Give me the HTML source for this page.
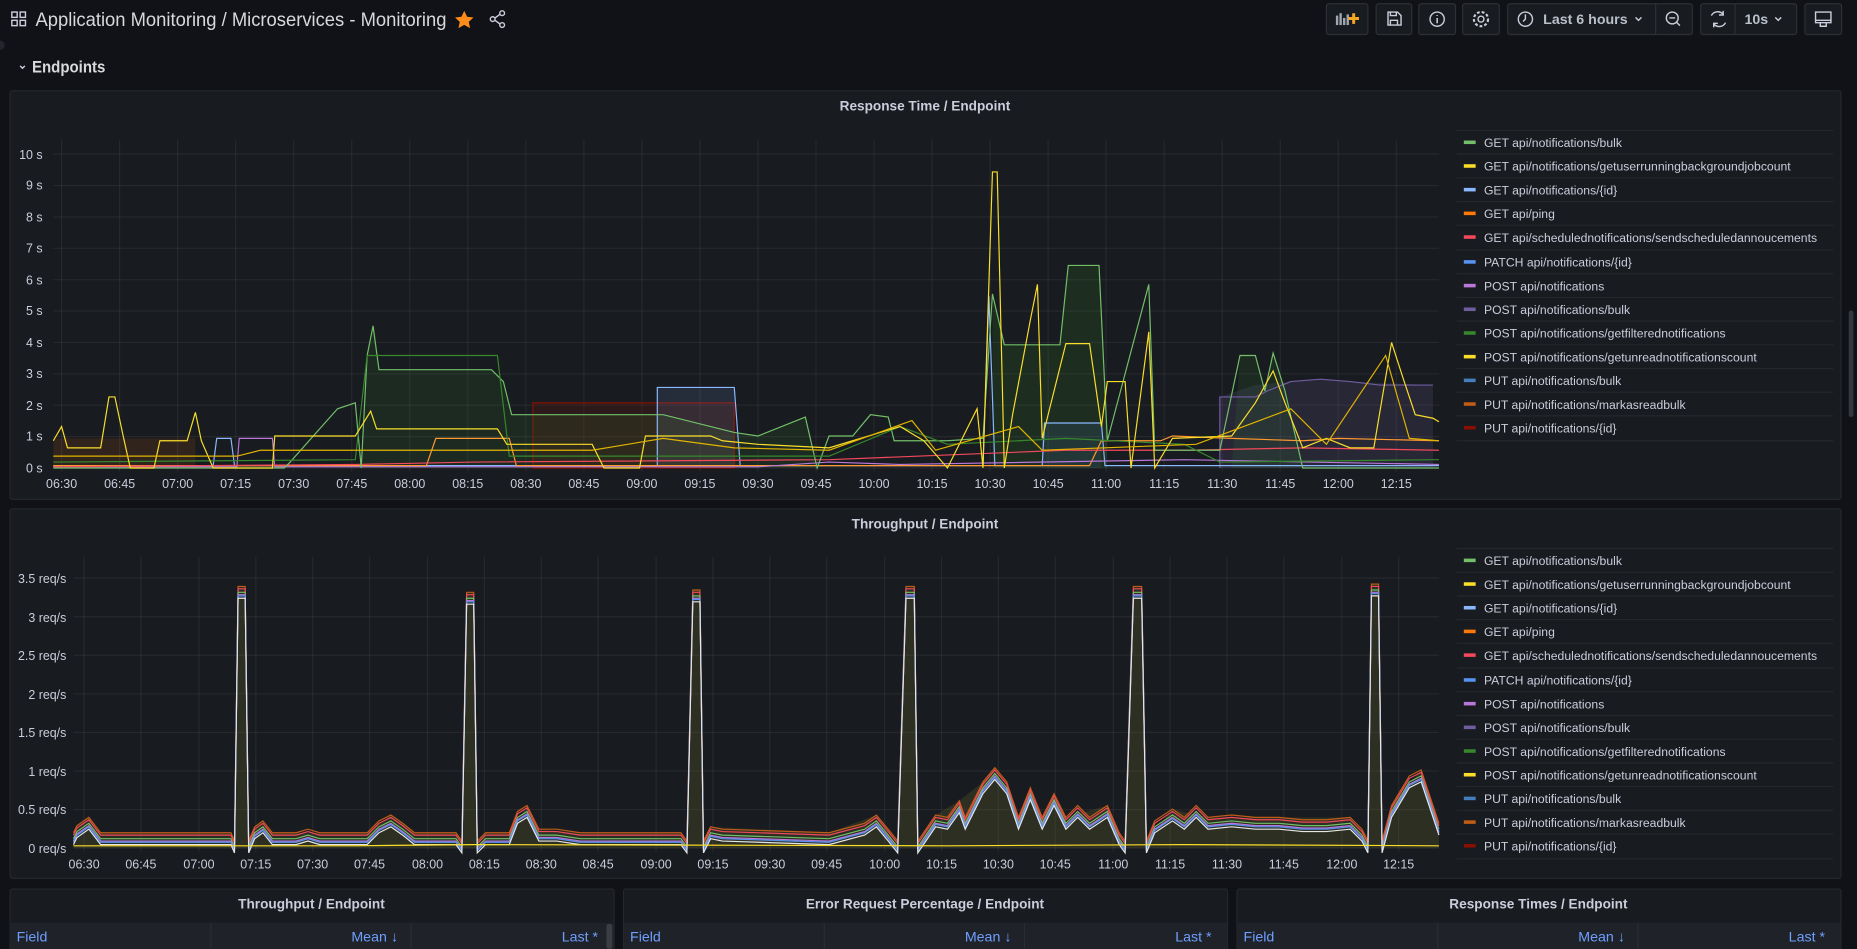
<!DOCTYPE html>
<html><head><meta charset="utf-8"><style>
html,body{margin:0;padding:0;background:#111217;width:1857px;height:949px;overflow:hidden}
svg{display:block}
text{font-family:"Liberation Sans",sans-serif;fill:#ccccdc}
.ax{font-size:10.5px;fill:#c7d0d9}
.lg{font-size:10.3px;fill:#ccccdc}
.ttl{font-size:11.5px;font-weight:bold;fill:#ccccdc}
.btn{fill:#181b1f;stroke:#2d3036;stroke-width:1}
.ic{fill:none;stroke:#ccccdc;stroke-width:1.2}
.grid line{stroke:rgba(204,204,220,0.08);stroke-width:1}
.sep{stroke:#24272c;stroke-width:1}
</style></head><body>
<svg width="1857" height="949" viewBox="0 0 1568 801" xmlns="http://www.w3.org/2000/svg">
<rect width="1568" height="801" fill="#111217"/>
<!-- header -->
<g class="ic"><rect x="10" y="10" width="4.5" height="4.5"/><rect x="17" y="10" width="4.5" height="4.5"/><rect x="10" y="17" width="4.5" height="4.5"/><rect x="17" y="17" width="4.5" height="4.5"/></g>
<text x="30" y="22" textLength="347" lengthAdjust="spacingAndGlyphs" style="font-size:16px;fill:#d8d9da">Application Monitoring  / Microservices - Monitoring</text>
<path d="M392 9 l2.4 5 5.4 .6 -4 3.7 1.1 5.3 -4.9 -2.7 -4.9 2.7 1.1 -5.3 -4 -3.7 5.4 -.6z" fill="#ff8c1a"/>
<g class="ic"><circle cx="416" cy="16" r="2"/><circle cx="424" cy="11" r="2"/><circle cx="424" cy="21" r="2"/><path d="M418 15 l4 -3 M418 17 l4 3"/></g>
<circle cx="0" cy="38" r="4" fill="#22252b"/>
<!-- buttons -->
<rect class="btn" x="1120" y="3" width="35" height="26" rx="2"/>
<g fill="#9fa7b3"><rect x="1128" y="13" width="2" height="8"/><rect x="1131" y="11" width="2" height="10"/><rect x="1134" y="15" width="2" height="6"/><rect x="1137" y="12" width="2" height="9"/></g>
<path d="M1143 11v9M1138.5 15.5h9" stroke="#f5a623" stroke-width="2.5"/>
<rect class="btn" x="1162" y="3" width="30" height="26" rx="2"/>
<path class="ic" d="M1172 10h8l3 3v8h-11z M1174 10v3h5v-3 M1174 21v-4h6v4"/>
<rect class="btn" x="1198" y="3" width="31" height="26" rx="2"/>
<circle class="ic" cx="1213.5" cy="16" r="6"/><path d="M1213.5 15v4.5M1213.5 12.5v.8" stroke="#ccccdc" stroke-width="1.3"/>
<rect class="btn" x="1235" y="3" width="31" height="26" rx="2"/>
<circle class="ic" cx="1250.5" cy="16" r="2.5"/><circle cx="1250.5" cy="16" r="6" fill="none" stroke="#ccccdc" stroke-width="1.8" stroke-dasharray="2.4 1.7"/>
<rect class="btn" x="1273" y="3" width="156" height="26" rx="2"/><line x1="1398" y1="3" x2="1398" y2="29" stroke="#2d3036"/>
<circle class="ic" cx="1288" cy="16" r="6"/><path class="ic" d="M1288 12v4l-2 2"/>
<text x="1303" y="20" style="font-size:12px;font-weight:bold;fill:#b8c0cc">Last 6 hours</text>
<path class="ic" d="M1381 14.5l2.5 2.5 2.5-2.5"/>
<circle class="ic" cx="1412" cy="15" r="5"/><path class="ic" d="M1409.5 15h5M1415.5 18.5l3 3"/>
<rect class="btn" x="1436" y="3" width="81" height="26" rx="2"/><line x1="1465" y1="3" x2="1465" y2="29" stroke="#2d3036"/>
<path class="ic" d="M1445 13a6 6 0 0 1 10 -1 M1455 9v3.5h-3.5 M1457 19a6 6 0 0 1 -10 1 M1447 23v-3.5h3.5"/>
<text x="1473" y="20" style="font-size:12px;font-weight:bold;fill:#b8c0cc">10s</text>
<path class="ic" d="M1499 14.5l2.5 2.5 2.5-2.5"/>
<rect class="btn" x="1524" y="3" width="31" height="26" rx="2"/>
<path class="ic" d="M1533 10h13v9h-13z M1533 17h13 M1537 19v3h5v-3"/>
<!-- Endpoints -->
<path class="ic" d="M17 55.5l2 2 2-2"/>
<text x="27" y="61" textLength="62" lengthAdjust="spacingAndGlyphs" style="font-size:14px;font-weight:bold;fill:#d8d9da">Endpoints</text>
<!-- scrollbar -->
<rect x="1561" y="262" width="4" height="90" rx="2" fill="#34373d"/>

<!-- PANEL 1 -->
<rect x="8.5" y="76.5" width="1546" height="345" rx="2" fill="#181b1f" stroke="#24272c"/>
<text class="ttl" x="781" y="93" text-anchor="middle">Response Time / Endpoint</text>
<g class="grid">
<line x1="45" y1="395" x2="1215" y2="395"/><line x1="45" y1="368.5" x2="1215" y2="368.5"/><line x1="45" y1="342" x2="1215" y2="342"/><line x1="45" y1="315.5" x2="1215" y2="315.5"/><line x1="45" y1="289" x2="1215" y2="289"/><line x1="45" y1="262.5" x2="1215" y2="262.5"/><line x1="45" y1="236" x2="1215" y2="236"/><line x1="45" y1="209.5" x2="1215" y2="209.5"/><line x1="45" y1="183" x2="1215" y2="183"/><line x1="45" y1="156.5" x2="1215" y2="156.5"/><line x1="45" y1="130" x2="1215" y2="130"/>
<line x1="52" y1="118" x2="52" y2="398"/><line x1="101" y1="118" x2="101" y2="398"/><line x1="150" y1="118" x2="150" y2="398"/><line x1="199" y1="118" x2="199" y2="398"/><line x1="248" y1="118" x2="248" y2="398"/><line x1="297" y1="118" x2="297" y2="398"/><line x1="346" y1="118" x2="346" y2="398"/><line x1="395" y1="118" x2="395" y2="398"/><line x1="444" y1="118" x2="444" y2="398"/><line x1="493" y1="118" x2="493" y2="398"/><line x1="542" y1="118" x2="542" y2="398"/><line x1="591" y1="118" x2="591" y2="398"/><line x1="640" y1="118" x2="640" y2="398"/><line x1="689" y1="118" x2="689" y2="398"/><line x1="738" y1="118" x2="738" y2="398"/><line x1="787" y1="118" x2="787" y2="398"/><line x1="836" y1="118" x2="836" y2="398"/><line x1="885" y1="118" x2="885" y2="398"/><line x1="934" y1="118" x2="934" y2="398"/><line x1="983" y1="118" x2="983" y2="398"/><line x1="1032" y1="118" x2="1032" y2="398"/><line x1="1081" y1="118" x2="1081" y2="398"/><line x1="1130" y1="118" x2="1130" y2="398"/><line x1="1179" y1="118" x2="1179" y2="398"/>
</g>
<g class="ax" text-anchor="end"><text x="36" y="399">0 s</text><text x="36" y="372">1 s</text><text x="36" y="346">2 s</text><text x="36" y="319">3 s</text><text x="36" y="293">4 s</text><text x="36" y="266">5 s</text><text x="36" y="240">6 s</text><text x="36" y="213">7 s</text><text x="36" y="187">8 s</text><text x="36" y="160">9 s</text><text x="36" y="134">10 s</text></g>
<g class="ax" text-anchor="middle"><text x="52" y="412">06:30</text><text x="101" y="412">06:45</text><text x="150" y="412">07:00</text><text x="199" y="412">07:15</text><text x="248" y="412">07:30</text><text x="297" y="412">07:45</text><text x="346" y="412">08:00</text><text x="395" y="412">08:15</text><text x="444" y="412">08:30</text><text x="493" y="412">08:45</text><text x="542" y="412">09:00</text><text x="591" y="412">09:15</text><text x="640" y="412">09:30</text><text x="689" y="412">09:45</text><text x="738" y="412">10:00</text><text x="787" y="412">10:15</text><text x="836" y="412">10:30</text><text x="885" y="412">10:45</text><text x="934" y="412">11:00</text><text x="983" y="412">11:15</text><text x="1032" y="412">11:30</text><text x="1081" y="412">11:45</text><text x="1130" y="412">12:00</text><text x="1179" y="412">12:15</text></g>
<!-- fills -->
<path d="M450 395V340H620V395Z" fill="#890f02" fill-opacity="0.18" stroke="#890f02" stroke-width="1"/>
<path d="M45 395V370H165V395Z" fill="#c15c17" fill-opacity="0.15"/>
<path d="M555 395V327H620V395Z" fill="#8ab8ff" fill-opacity="0.12"/>
<path d="M1030 395V335L1060 325 1090 322 1115 320 1140 322 1210 325V395Z" fill="#705da0" fill-opacity="0.18"/>
<path d="M305 395L310 300 315 275 320 312 415 312 425 322 432 350 560 350 620 365 640 368 680 352 690 395Z" fill="#37872d" fill-opacity="0.15"/>
<path d="M838 395L838 248 848 291 895 291 902 224 928 224 935 372 935 395Z" fill="#37872d" fill-opacity="0.18"/>
<path d="M1040 395L1047 300 1060 300 1068 330 1075 298 1085 330 1100 395Z" fill="#37872d" fill-opacity="0.15"/>
<path d="M880 395V357H930V395Z" fill="#5794f2" fill-opacity="0.1"/>
<g fill="none" stroke-width="1">
<polyline stroke="#705da0" points="1030,395 1030,335 1060,335 1070,330 1090,322 1115,320 1140,322 1165,325 1210,325"/>
<polyline stroke="#8ab8ff" points="45,393 180,393 183,370 195,370 198,393 555,393 555,327 620,327 625,393 830,393 835,250 840,393 880,393 882,357 930,357 933,393 1215,393"/>
<polyline stroke="#ff9830" points="45,393 360,393 368,370 430,370 436,393 920,393 930,372 980,372 990,368 1040,370 1100,372 1130,370 1215,372"/>
<polyline stroke="#b877d9" points="45,394 200,394 202,370 230,370 232,394 640,394 700,390 760,392 1000,388 1215,392"/>
<polyline stroke="#f2495c" points="45,394 300,392 400,390 700,388 900,380 1000,380 1100,378 1215,380"/>
<polyline stroke="#73bf69" points="45,395 240,395 245,390 285,345 300,340 305,395 310,300 315,275 320,312 415,312 425,322 432,350 560,350 620,365 640,368 680,352 690,395 700,368 720,368 735,350 750,352 755,372 800,372 830,370 838,248 848,291 895,291 902,224 928,224 935,372 970,240 975,380 1030,380 1047,300 1060,300 1068,330 1075,298 1085,330 1100,395 1215,395"/>
<polyline stroke="#37872d" points="45,390 300,388 310,300 420,300 430,385 700,385 760,360 800,375 900,370 1000,375 1030,390 1215,388"/>
<polyline stroke="#fade2a" points="45,372 52,360 57,378 85,378 92,335 97,335 104,368 110,395 130,395 135,372 158,372 165,348 170,372 180,395 230,395 232,368 300,368 313,347 318,362 420,362 428,375 500,375 510,395 540,395 545,368 600,368 610,372 640,375 700,378 720,372 760,360 780,372 800,395 825,345 830,395 838,145 842,145 848,395 855,350 870,270 876,240 880,370 900,290 920,290 930,360 935,322 950,322 955,395 970,280 975,395 990,370 1040,368 1060,340 1075,313 1085,340 1100,378 1120,370 1140,378 1160,378 1175,289 1185,320 1195,350 1210,353 1215,356"/>
<polyline stroke="#e0b400" points="45,385 200,385 220,380 500,380 560,370 620,378 700,380 770,355 790,380 860,360 880,380 1010,375 1050,360 1090,345 1120,375 1170,300 1190,370 1215,372"/>
</g>
<!-- legend 1 -->
<g class="sep"><line x1="1230" y1="110" x2="1548" y2="110"/><line x1="1230" y1="130" x2="1548" y2="130"/><line x1="1230" y1="150" x2="1548" y2="150"/><line x1="1230" y1="170" x2="1548" y2="170"/><line x1="1230" y1="190" x2="1548" y2="190"/><line x1="1230" y1="211" x2="1548" y2="211"/><line x1="1230" y1="231" x2="1548" y2="231"/><line x1="1230" y1="251" x2="1548" y2="251"/><line x1="1230" y1="271" x2="1548" y2="271"/><line x1="1230" y1="291" x2="1548" y2="291"/><line x1="1230" y1="311" x2="1548" y2="311"/><line x1="1230" y1="331" x2="1548" y2="331"/><line x1="1230" y1="351" x2="1548" y2="351"/><line x1="1230" y1="372" x2="1548" y2="372"/></g>
<g stroke-width="3">
<line x1="1236" y1="120" x2="1246" y2="120" stroke="#73bf69"/><line x1="1236" y1="140" x2="1246" y2="140" stroke="#fade2a"/><line x1="1236" y1="160" x2="1246" y2="160" stroke="#8ab8ff"/><line x1="1236" y1="180" x2="1246" y2="180" stroke="#ff780a"/><line x1="1236" y1="200" x2="1246" y2="200" stroke="#f2495c"/><line x1="1236" y1="221" x2="1246" y2="221" stroke="#5794f2"/><line x1="1236" y1="241" x2="1246" y2="241" stroke="#b877d9"/><line x1="1236" y1="261" x2="1246" y2="261" stroke="#705da0"/><line x1="1236" y1="281" x2="1246" y2="281" stroke="#37872d"/><line x1="1236" y1="301" x2="1246" y2="301" stroke="#fade2a"/><line x1="1236" y1="321" x2="1246" y2="321" stroke="#447ebc"/><line x1="1236" y1="341" x2="1246" y2="341" stroke="#c15c17"/><line x1="1236" y1="361" x2="1246" y2="361" stroke="#890f02"/>
</g>
<g class="lg"><text x="1253" y="124">GET api/notifications/bulk</text><text x="1253" y="144">GET api/notifications/getuserrunningbackgroundjobcount</text><text x="1253" y="164">GET api/notifications/{id}</text><text x="1253" y="184">GET api/ping</text><text x="1253" y="204">GET api/schedulednotifications/sendscheduledannoucements</text><text x="1253" y="225">PATCH api/notifications/{id}</text><text x="1253" y="245">POST api/notifications</text><text x="1253" y="265">POST api/notifications/bulk</text><text x="1253" y="285">POST api/notifications/getfilterednotifications</text><text x="1253" y="305">POST api/notifications/getunreadnotificationscount</text><text x="1253" y="325">PUT api/notifications/bulk</text><text x="1253" y="345">PUT api/notifications/markasreadbulk</text><text x="1253" y="365">PUT api/notifications/{id}</text></g>

<!-- PANEL 2 -->
<rect x="8.5" y="429.5" width="1546" height="312" rx="2" fill="#181b1f" stroke="#24272c"/>
<text class="ttl" x="781" y="446" text-anchor="middle">Throughput / Endpoint</text>
<g class="grid">
<line x1="62" y1="716" x2="1215" y2="716"/><line x1="62" y1="683.4" x2="1215" y2="683.4"/><line x1="62" y1="650.9" x2="1215" y2="650.9"/><line x1="62" y1="618.3" x2="1215" y2="618.3"/><line x1="62" y1="585.7" x2="1215" y2="585.7"/><line x1="62" y1="553.1" x2="1215" y2="553.1"/><line x1="62" y1="520.6" x2="1215" y2="520.6"/><line x1="62" y1="488" x2="1215" y2="488"/>
<line x1="71" y1="470" x2="71" y2="719"/><line x1="119" y1="470" x2="119" y2="719"/><line x1="168" y1="470" x2="168" y2="719"/><line x1="216" y1="470" x2="216" y2="719"/><line x1="264" y1="470" x2="264" y2="719"/><line x1="312" y1="470" x2="312" y2="719"/><line x1="361" y1="470" x2="361" y2="719"/><line x1="409" y1="470" x2="409" y2="719"/><line x1="457" y1="470" x2="457" y2="719"/><line x1="505" y1="470" x2="505" y2="719"/><line x1="554" y1="470" x2="554" y2="719"/><line x1="602" y1="470" x2="602" y2="719"/><line x1="650" y1="470" x2="650" y2="719"/><line x1="698" y1="470" x2="698" y2="719"/><line x1="747" y1="470" x2="747" y2="719"/><line x1="795" y1="470" x2="795" y2="719"/><line x1="843" y1="470" x2="843" y2="719"/><line x1="891" y1="470" x2="891" y2="719"/><line x1="940" y1="470" x2="940" y2="719"/><line x1="988" y1="470" x2="988" y2="719"/><line x1="1036" y1="470" x2="1036" y2="719"/><line x1="1084" y1="470" x2="1084" y2="719"/><line x1="1133" y1="470" x2="1133" y2="719"/><line x1="1181" y1="470" x2="1181" y2="719"/>
</g>
<g class="ax" text-anchor="end"><text x="56" y="720">0 req/s</text><text x="56" y="687">0.5 req/s</text><text x="56" y="655">1 req/s</text><text x="56" y="622">1.5 req/s</text><text x="56" y="590">2 req/s</text><text x="56" y="557">2.5 req/s</text><text x="56" y="525">3 req/s</text><text x="56" y="492">3.5 req/s</text></g>
<g class="ax" text-anchor="middle"><text x="71" y="733">06:30</text><text x="119" y="733">06:45</text><text x="168" y="733">07:00</text><text x="216" y="733">07:15</text><text x="264" y="733">07:30</text><text x="312" y="733">07:45</text><text x="361" y="733">08:00</text><text x="409" y="733">08:15</text><text x="457" y="733">08:30</text><text x="505" y="733">08:45</text><text x="554" y="733">09:00</text><text x="602" y="733">09:15</text><text x="650" y="733">09:30</text><text x="698" y="733">09:45</text><text x="747" y="733">10:00</text><text x="795" y="733">10:15</text><text x="843" y="733">10:30</text><text x="891" y="733">10:45</text><text x="940" y="733">11:00</text><text x="988" y="733">11:15</text><text x="1036" y="733">11:30</text><text x="1084" y="733">11:45</text><text x="1133" y="733">12:00</text><text x="1181" y="733">12:15</text></g>
<defs>
<polyline id="tp" fill="none" points="62,703 65,697 75,690 85,703 195,703 198,710 201,495 207,495 210,710 215,698 222,693 230,703 250,703 260,700 270,703 310,703 320,693 330,688 340,695 350,703 385,703 390,710 394,500 400,500 403,710 410,703 430,703 437,685 445,680 455,700 470,700 490,703 575,703 580,710 585,498 591,498 594,710 600,698 610,700 700,703 730,695 740,688 750,700 758,710 765,495 772,495 775,710 790,688 800,690 810,676 815,690 830,660 840,648 850,660 860,690 870,665 880,690 890,670 900,690 910,680 920,690 935,680 945,703 950,710 957,495 964,495 968,710 975,693 990,683 1000,690 1010,680 1020,690 1040,688 1060,690 1080,690 1100,692 1120,692 1140,690 1150,700 1155,710 1158,493 1164,493 1167,710 1175,680 1190,655 1200,650 1205,665 1215,695"/>
</defs>
<path d="M62,716 L62,703 65,697 75,690 85,703 195,703 198,710 201,495 207,495 210,710 215,698 222,693 230,703 250,703 310,703 330,688 350,703 385,703 390,710 394,500 400,500 403,710 410,703 430,703 445,680 455,700 490,703 575,703 580,710 585,498 591,498 594,710 600,698 700,703 740,688 758,710 765,495 772,495 775,710 790,688 810,676 830,660 840,648 860,690 870,665 880,690 890,670 900,690 935,680 945,703 950,710 957,495 964,495 968,710 990,683 1020,690 1140,690 1155,710 1158,493 1164,493 1167,710 1175,680 1200,650 1215,695 L1215,716Z" fill="#6a6a2a" fill-opacity="0.25"/>
<use href="#tp" stroke="#c15c17" stroke-width="1"/>
<use href="#tp" stroke="#f2495c" stroke-width="1" transform="translate(0,2)"/>
<use href="#tp" stroke="#73bf69" stroke-width="1" transform="translate(0,5)"/>
<use href="#tp" stroke="#b877d9" stroke-width="1" transform="translate(0,7)"/>
<use href="#tp" stroke="#5794f2" stroke-width="1" transform="translate(0,8)"/>
<use href="#tp" stroke="#e6e6e6" stroke-width="1" transform="translate(0,10)"/>
<polyline fill="none" stroke="#fade2a" points="62,714 300,714 400,713 800,714 1000,713 1215,714"/>
<!-- legend 2 -->
<g class="sep"><line x1="1230" y1="463" x2="1548" y2="463"/><line x1="1230" y1="483" x2="1548" y2="483"/><line x1="1230" y1="503" x2="1548" y2="503"/><line x1="1230" y1="523" x2="1548" y2="523"/><line x1="1230" y1="543" x2="1548" y2="543"/><line x1="1230" y1="564" x2="1548" y2="564"/><line x1="1230" y1="584" x2="1548" y2="584"/><line x1="1230" y1="604" x2="1548" y2="604"/><line x1="1230" y1="624" x2="1548" y2="624"/><line x1="1230" y1="644" x2="1548" y2="644"/><line x1="1230" y1="664" x2="1548" y2="664"/><line x1="1230" y1="684" x2="1548" y2="684"/><line x1="1230" y1="704" x2="1548" y2="704"/><line x1="1230" y1="725" x2="1548" y2="725"/></g>
<g stroke-width="3">
<line x1="1236" y1="473" x2="1246" y2="473" stroke="#73bf69"/><line x1="1236" y1="493" x2="1246" y2="493" stroke="#fade2a"/><line x1="1236" y1="513" x2="1246" y2="513" stroke="#8ab8ff"/><line x1="1236" y1="533" x2="1246" y2="533" stroke="#ff780a"/><line x1="1236" y1="553" x2="1246" y2="553" stroke="#f2495c"/><line x1="1236" y1="574" x2="1246" y2="574" stroke="#5794f2"/><line x1="1236" y1="594" x2="1246" y2="594" stroke="#b877d9"/><line x1="1236" y1="614" x2="1246" y2="614" stroke="#705da0"/><line x1="1236" y1="634" x2="1246" y2="634" stroke="#37872d"/><line x1="1236" y1="654" x2="1246" y2="654" stroke="#fade2a"/><line x1="1236" y1="674" x2="1246" y2="674" stroke="#447ebc"/><line x1="1236" y1="694" x2="1246" y2="694" stroke="#c15c17"/><line x1="1236" y1="714" x2="1246" y2="714" stroke="#890f02"/>
</g>
<g class="lg"><text x="1253" y="477">GET api/notifications/bulk</text><text x="1253" y="497">GET api/notifications/getuserrunningbackgroundjobcount</text><text x="1253" y="517">GET api/notifications/{id}</text><text x="1253" y="537">GET api/ping</text><text x="1253" y="557">GET api/schedulednotifications/sendscheduledannoucements</text><text x="1253" y="578">PATCH api/notifications/{id}</text><text x="1253" y="598">POST api/notifications</text><text x="1253" y="618">POST api/notifications/bulk</text><text x="1253" y="638">POST api/notifications/getfilterednotifications</text><text x="1253" y="658">POST api/notifications/getunreadnotificationscount</text><text x="1253" y="678">PUT api/notifications/bulk</text><text x="1253" y="698">PUT api/notifications/markasreadbulk</text><text x="1253" y="718">PUT api/notifications/{id}</text></g>

<!-- bottom panels -->
<g>
<rect x="8.5" y="750.5" width="510" height="60" rx="2" fill="#181b1f" stroke="#24272c"/>
<rect x="9" y="779" width="509" height="23" fill="#1f2228"/>
<line x1="178" y1="779" x2="178" y2="801" stroke="#2a2d33"/><line x1="347" y1="779" x2="347" y2="801" stroke="#2a2d33"/>
<text class="ttl" x="263" y="767" text-anchor="middle">Throughput / Endpoint</text>
<text x="14" y="795" style="font-size:12px;fill:#6e9fff">Field</text>
<text x="336" y="795" text-anchor="end" style="font-size:12px;fill:#6e9fff">Mean ↓</text>
<text x="505" y="795" text-anchor="end" style="font-size:12px;fill:#6e9fff">Last *</text>
<rect x="512" y="780" width="5" height="21" rx="2" fill="#3a3d44"/>
</g>
<g transform="translate(518,0)">
<rect x="8.5" y="750.5" width="510" height="60" rx="2" fill="#181b1f" stroke="#24272c"/>
<rect x="9" y="779" width="509" height="23" fill="#1f2228"/>
<line x1="178" y1="779" x2="178" y2="801" stroke="#2a2d33"/><line x1="347" y1="779" x2="347" y2="801" stroke="#2a2d33"/>
<text class="ttl" x="263" y="767" text-anchor="middle">Error Request Percentage / Endpoint</text>
<text x="14" y="795" style="font-size:12px;fill:#6e9fff">Field</text>
<text x="336" y="795" text-anchor="end" style="font-size:12px;fill:#6e9fff">Mean ↓</text>
<text x="505" y="795" text-anchor="end" style="font-size:12px;fill:#6e9fff">Last *</text>
</g>
<g transform="translate(1036,0)">
<rect x="8.5" y="750.5" width="510" height="60" rx="2" fill="#181b1f" stroke="#24272c"/>
<rect x="9" y="779" width="509" height="23" fill="#1f2228"/>
<line x1="178" y1="779" x2="178" y2="801" stroke="#2a2d33"/><line x1="347" y1="779" x2="347" y2="801" stroke="#2a2d33"/>
<text class="ttl" x="263" y="767" text-anchor="middle">Response Times / Endpoint</text>
<text x="14" y="795" style="font-size:12px;fill:#6e9fff">Field</text>
<text x="336" y="795" text-anchor="end" style="font-size:12px;fill:#6e9fff">Mean ↓</text>
<text x="505" y="795" text-anchor="end" style="font-size:12px;fill:#6e9fff">Last *</text>
</g>
</svg>
</body></html>
